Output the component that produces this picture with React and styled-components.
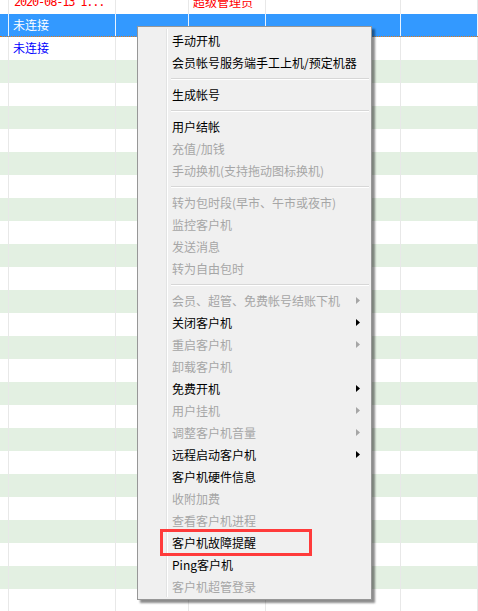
import React from "react";
import styled, { createGlobalStyle } from "styled-components";

const Global = createGlobalStyle`
  html, body { margin: 0; padding: 0; background: #fff; }
  body { font-family: "Noto Sans CJK SC", "Microsoft YaHei", sans-serif; font-size: 12px; }
`;

const Page = styled.div`
  position: relative;
  width: 478px;
  height: 611px;
  overflow: hidden;
  background: #fff;
`;

const Table = styled.div`
  margin-top: -9px;
  display: flex;
  flex-direction: column;
`;

const Row = styled.div`
  display: grid;
  grid-template-columns: 9px 107px 73px 77px 135px 1fr;
  height: 23px;
  box-sizing: border-box;
  background: ${(p) => (p.$selected ? "#3399ff" : p.$green ? "#e3f0e2" : "#ffffff")};
  ${(p) => p.$selected && "border-bottom: 1px dotted #e07a1a;"}
`;

const Cell = styled.div`
  border-right: 1px solid ${(p) => (p.$sel ? "#e9f3ff" : "#e8e8e8")};
  padding-left: ${(p) => (p.$mono ? "5px" : "4px")};
  line-height: ${(p) => (p.$mono ? "22px" : "22px")};
  white-space: nowrap;
  overflow: hidden;
  font-size: ${(p) => (p.$mono ? "12px" : "12px")};
  letter-spacing: ${(p) => (p.$mono ? "-1.2px" : "0")};
  font-family: ${(p) =>
    p.$mono ? '"DejaVu Sans Mono", monospace' : '"Noto Sans CJK SC", sans-serif'};
  color: ${(p) => p.$color || "#000"};
`;

const Menu = styled.div`
  position: absolute;
  left: 137px;
  top: 26px;
  width: 235px;
  box-sizing: border-box;
  padding: 2px;
  background: #f0f0f0;
  border: 1px solid #979797;
  box-shadow: 3px 3px 2px rgba(0, 0, 0, 0.45);
  display: flex;
  flex-direction: column;
  &::before {
    content: "";
    position: absolute;
    left: 28px;
    top: 2px;
    bottom: 2px;
    width: 1px;
    background: #e2e3e3;
    box-shadow: 1px 0 0 #ffffff;
  }
`;

const Item = styled.div`
  height: 22px;
  display: flex;
  align-items: center;
  padding-left: 32px;
  padding-right: 9px;
  font-size: 12px;
  font-family: "Noto Sans CJK SC", sans-serif;
  color: ${(p) => (p.$disabled ? "#a6a6a6" : "#000")};
  white-space: nowrap;
`;

const Label = styled.span`
  flex: 1;
`;

const Sep = styled.div`
  height: 10px;
  display: flex;
  align-items: center;
  padding-left: 31px;
  &::after {
    content: "";
    flex: 1;
    height: 1px;
    background: #d7d7d7;
    box-shadow: 0 1px 0 #ffffff;
  }
`;

const Highlight = styled.div`
  position: absolute;
  left: 160px;
  top: 529px;
  width: 152px;
  height: 27px;
  box-sizing: border-box;
  border: 3px solid #ff3b3b;
  pointer-events: none;
`;

const Arrow = ({ disabled }) => (
  <svg width="4" height="7" viewBox="0 0 4 7">
    <polygon points="0,0 4,3.5 0,7" fill={disabled ? "#a6a6a6" : "#000"} />
  </svg>
);

const items = [
  { t: "手动开机" },
  { t: "会员帐号服务端手工上机/预定机器" },
  { sep: true },
  { t: "生成帐号" },
  { sep: true },
  { t: "用户结帐" },
  { t: "充值/加钱", d: true },
  { t: "手动换机(支持拖动图标换机)", d: true },
  { sep: true },
  { t: "转为包时段(早市、午市或夜市)", d: true },
  { t: "监控客户机", d: true },
  { t: "发送消息", d: true },
  { t: "转为自由包时", d: true },
  { sep: true },
  { t: "会员、超管、免费帐号结账下机", d: true, sub: true },
  { t: "关闭客户机", sub: true },
  { t: "重启客户机", d: true, sub: true },
  { t: "卸载客户机", d: true },
  { t: "免费开机", sub: true },
  { t: "用户挂机", d: true, sub: true },
  { t: "调整客户机音量", d: true, sub: true },
  { t: "远程启动客户机", sub: true },
  { t: "客户机硬件信息" },
  { t: "收附加费", d: true },
  { t: "查看客户机进程", d: true },
  { t: "客户机故障提醒" },
  { t: "Ping客户机" },
  { t: "客户机超管登录", d: true },
];

export default function App() {
  const rows = [];
  for (let i = 0; i < 28; i++) {
    const selected = i === 1;
    const green = i >= 3 && (i - 3) % 2 === 0;
    let c1 = "";
    let c3 = "";
    let color = "#000";
    if (i === 0) {
      c1 = "2020-08-13 1...";
      c3 = "超级管理员";
      color = "#ff0000";
    } else if (i === 1) {
      c1 = "未连接";
      color = "#ffffff";
    } else if (i === 2) {
      c1 = "未连接";
      color = "#0000ff";
    }
    rows.push(
      <Row key={i} $selected={selected} $green={green}>
        <Cell $sel={selected} />
        <Cell $sel={selected} $color={color} $mono={i === 0}>{c1}</Cell>
        <Cell $sel={selected} />
        <Cell $sel={selected} $color={color}>{c3}</Cell>
        <Cell $sel={selected} />
        <Cell $sel={selected} />
      </Row>
    );
  }
  return (
    <Page>
      <Global />
      <Table>{rows}</Table>
      <Menu>
        {items.map((it, i) =>
          it.sep ? (
            <Sep key={i} />
          ) : (
            <Item key={i} $disabled={it.d}>
              <Label>{it.t}</Label>
              {it.sub && <Arrow disabled={it.d} />}
            </Item>
          )
        )}
      </Menu>
      <Highlight />
    </Page>
  );
}
